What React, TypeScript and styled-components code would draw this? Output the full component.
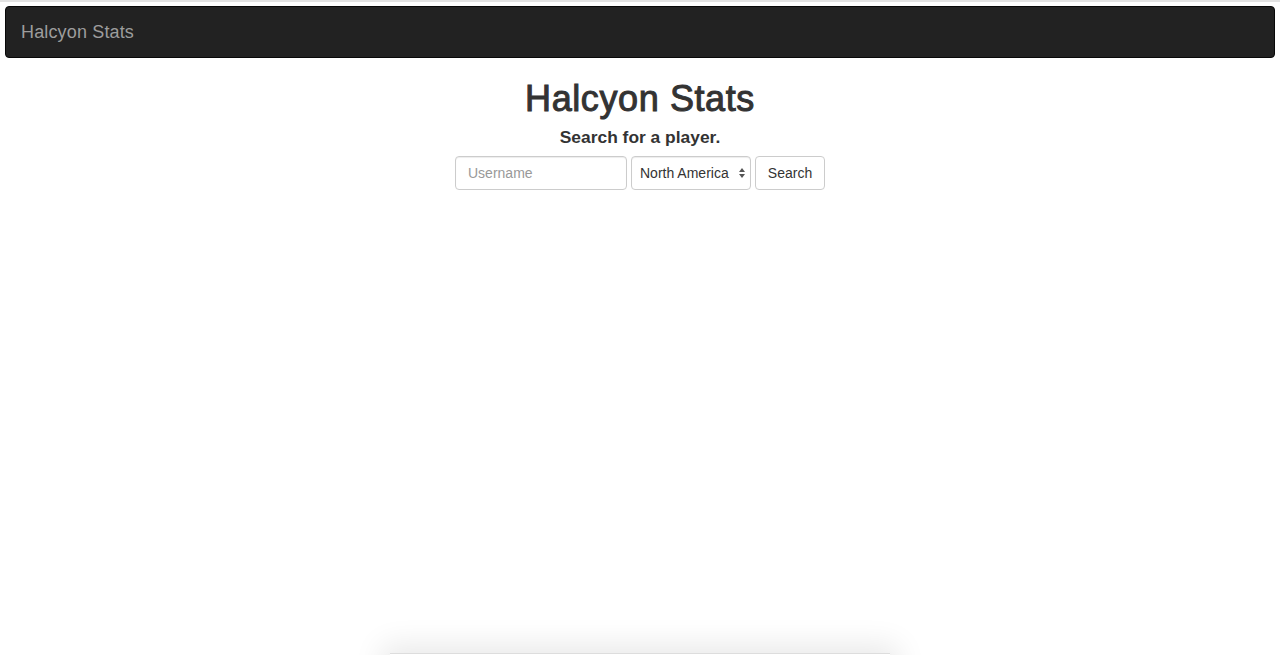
import React from "react";
import styled, { createGlobalStyle } from "styled-components";

const Global = createGlobalStyle`
  html, body { margin: 0; padding: 0; background: #fff; }
  body {
    font-family: "Liberation Sans", Arial, Helvetica, sans-serif;
    font-size: 14px;
    color: #333;
    overflow: hidden;
  }
  * { box-sizing: border-box; }
`;

const Page = styled.div`
  min-height: 655px;
  border-top: 2px solid #e3e3e3;
  padding: 4px 5px 0;
`;

const Navbar = styled.nav`
  height: 52px;
  background: #222;
  border: 1px solid #080808;
  border-radius: 4px;
  display: flex;
  align-items: center;
  padding: 0 15px;
`;

const Brand = styled.a`
  color: #9d9d9d;
  font-size: 18px;
  letter-spacing: 0.15px;
  line-height: 20px;
  text-decoration: none;
`;

const Main = styled.main`
  display: flex;
  flex-direction: column;
  align-items: center;
  padding-top: 19px;
`;

const Title = styled.h1`
  margin: 0;
  font-size: 36px;
  font-weight: 400;
  letter-spacing: 0.6px;
  -webkit-text-stroke: 1px #333;
  line-height: 44px;
  color: #333;
`;

const Subtitle = styled.h4`
  margin: 4px 0 0;
  font-size: 17.4px;
  font-weight: 700;
  line-height: 24px;
  color: #333;
`;

const Form = styled.form`
  display: flex;
  gap: 4px;
  margin-top: 7px;
`;

const Field = styled.input`
  width: 172px;
  height: 34px;
  padding: 6px 12px;
  font: 14px "Liberation Sans", Arial, sans-serif;
  color: #555;
  border: 1px solid #ccc;
  border-radius: 4px;
  box-shadow: inset 0 1px 1px rgba(0, 0, 0, 0.075);
  outline: none;
  &::placeholder { color: #999; }
`;

const SelectWrap = styled.div`
  position: relative;
  width: 120px;
  height: 34px;
`;

const Select = styled.select`
  appearance: none;
  width: 100%;
  height: 100%;
  padding: 0 18px 0 8px;
  font: 14px "Liberation Sans", Arial, sans-serif;
  color: #333;
  background: #fff;
  border: 1px solid #ccc;
  border-radius: 4px;
  box-shadow: inset 0 1px 1px rgba(0, 0, 0, 0.075);
`;

const Arrows = styled.svg`
  position: absolute;
  right: 5px;
  top: 11px;
  pointer-events: none;
`;

const Button = styled.button`
  width: 70px;
  height: 34px;
  font: 14px "Liberation Sans", Arial, sans-serif;
  color: #333;
  background: #fff;
  border: 1px solid #ccc;
  border-radius: 4px;
  padding: 0;
`;

const BottomShadow = styled.div`
  position: fixed;
  left: 390px;
  width: 500px;
  bottom: -40px;
  height: 42px;
  background: #fff;
  border-top: 1px solid #ddd;
  box-shadow: 0 0 30px 8px rgba(0, 0, 0, 0.09);
`;

export default function App() {
  return (
    <>
      <Global />
      <Page>
        <Navbar>
          <Brand href="#">Halcyon Stats</Brand>
        </Navbar>
        <Main>
          <Title>Halcyon Stats</Title>
          <Subtitle>Search for a player.</Subtitle>
          <Form onSubmit={(e) => e.preventDefault()}>
            <Field placeholder="Username" />
            <SelectWrap>
              <Select defaultValue="na">
                <option value="na">North America</option>
                <option value="eu">Europe</option>
                <option value="sa">South America</option>
                <option value="ea">East Asia</option>
                <option value="sg">Southeast Asia</option>
              </Select>
              <Arrows width="8" height="12" viewBox="0 0 8 12">
                <path d="M4 1 L7 5 H1 Z" fill="#555" />
                <path d="M4 11 L7 7 H1 Z" fill="#555" />
              </Arrows>
            </SelectWrap>
            <Button type="submit">Search</Button>
          </Form>
        </Main>
        <BottomShadow />
      </Page>
    </>
  );
}
